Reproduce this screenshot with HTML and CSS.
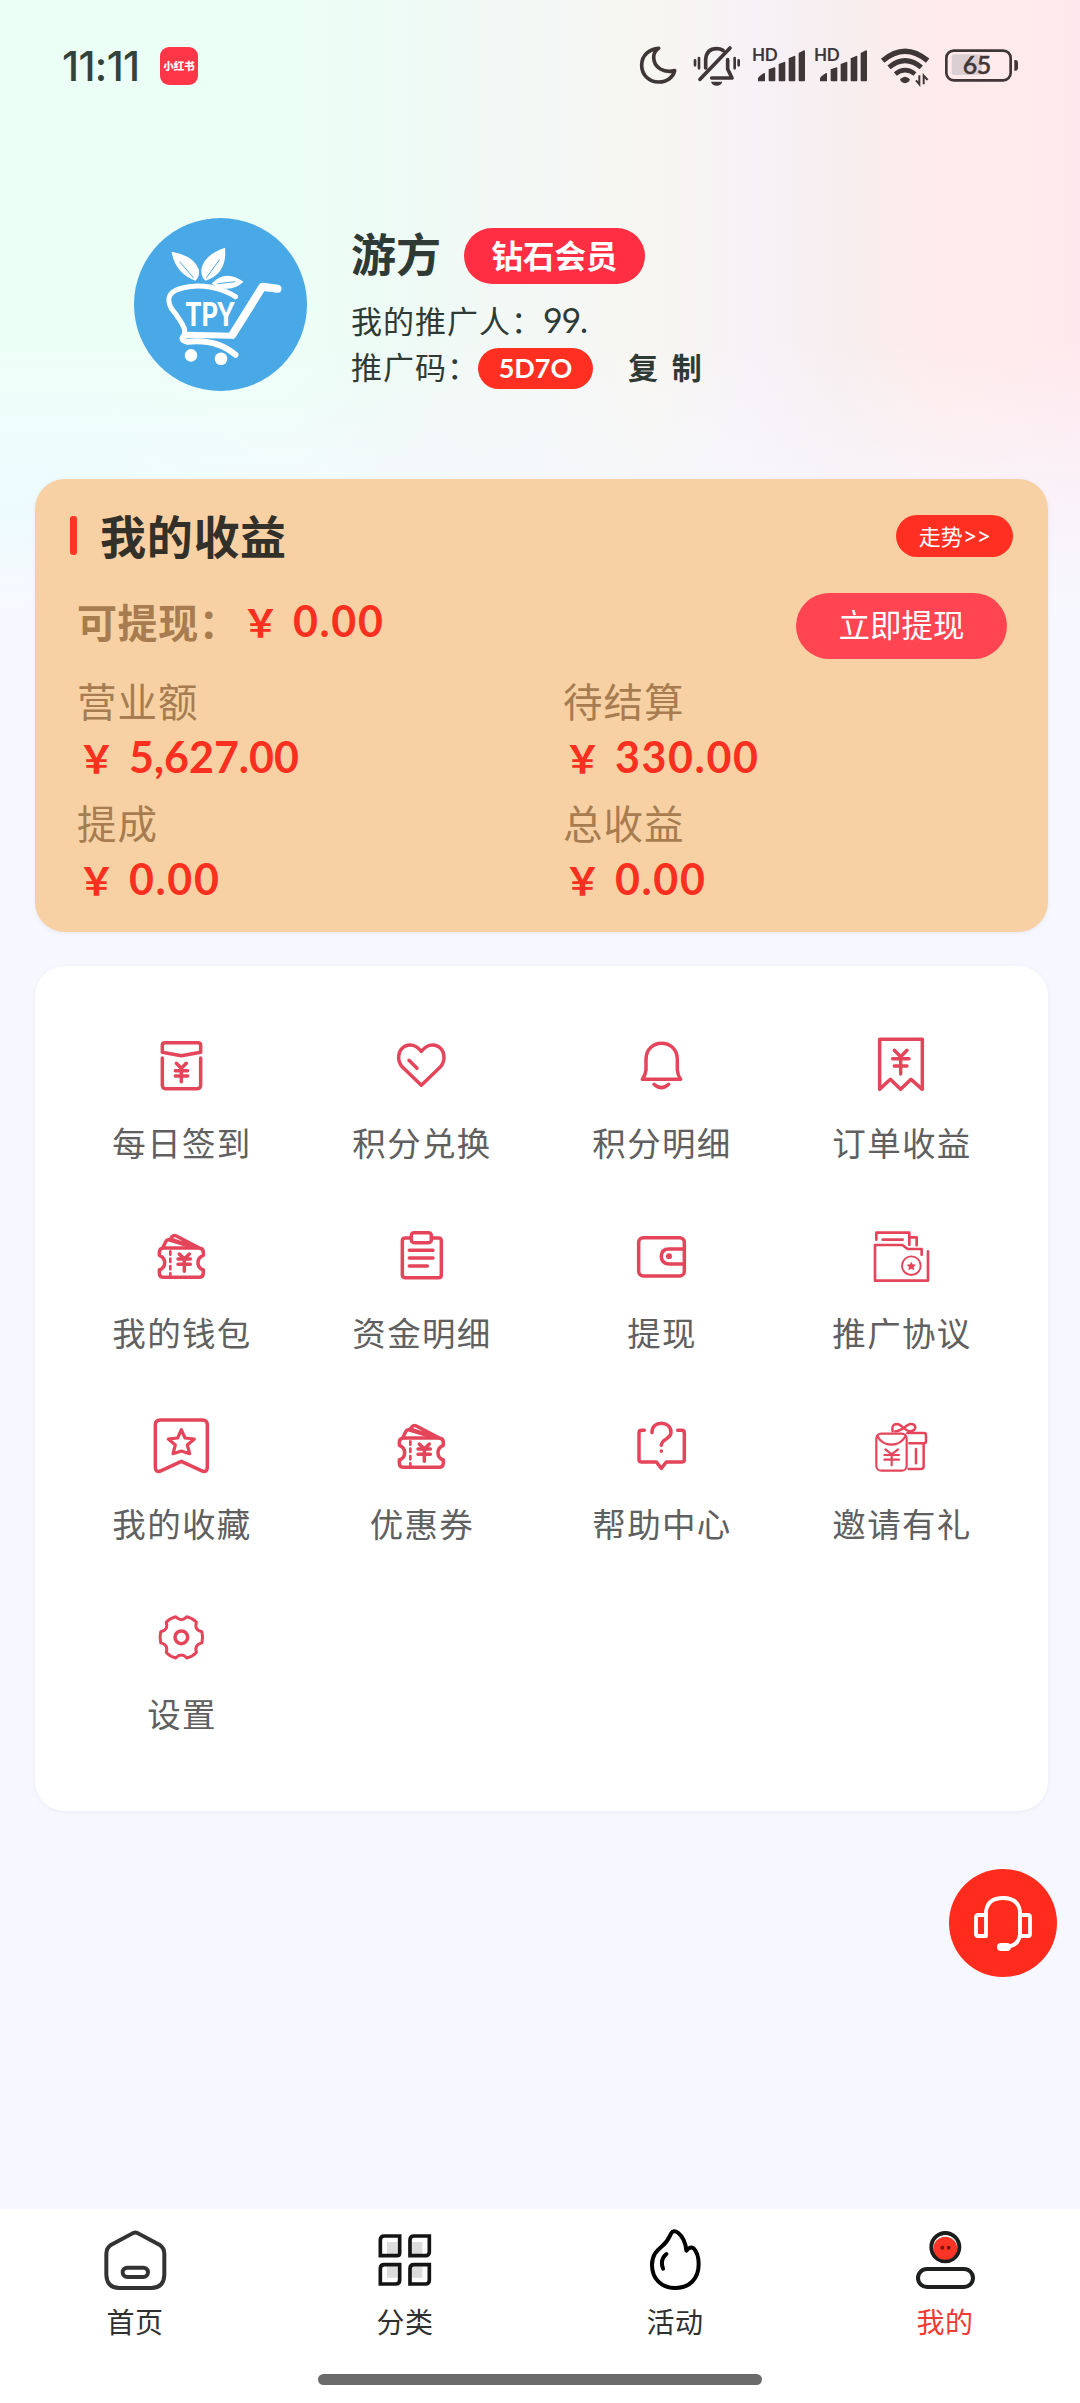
FILE: index.html
```html
<!DOCTYPE html>
<html lang="zh-CN">
<head>
<meta charset="utf-8">
<title>我的</title>
<link rel="stylesheet" href="styles.css">
</head>
<body>
<svg class="defs" aria-hidden="true">
  <symbol id="ticket" viewBox="174 638 200 200">
    <path d="M222 713h104q14 0 14 14v8q-16 6-16 22t16 22v8q0 14-14 14H222q-14 0-14-14v-8q16-6 16-22t-16-22v-8q0-14 14-14z"/>
    <path d="M220 709l7-15q4-8 12-5l72 22M240 688l6-9q6-6 13-2l66 35M246 688l66 22"/>
    <path stroke-width="8" stroke-dasharray="10 12" d="M241 723v74"/>
    <path d="M268 731l15 15 15-15M264 746h37M264 762h37M283 746v37"/>
  </symbol>
</svg>
<div class="page">
  <header class="status">
    <span class="time">11:11</span>
    <span class="app-badge">小红书</span>
    <div class="status-icons">
      <svg class="moon" viewBox="55 70 120 140"><path d="M117 86C92 87 66 105 66 137C66 166 88 187 117 187C143 187 161 172 165 153C134 160 102 146 102 113C102 101 108 92 117 86Z" fill="none" stroke="currentColor" stroke-width="11" stroke-linejoin="round"/></svg>
      <svg class="bell" viewBox="215 70 150 140"><g fill="none" stroke="currentColor" stroke-width="11" stroke-linecap="round" stroke-linejoin="round"><path d="M329 85L239 179M256 145V119Q259 87 289 87Q300 87 308 92M322 120V148L335 175H274"/><path stroke-width="8" d="M224 122V137M236 115V146M343 115V146M355 122V137"/></g><path d="M272 186h34q-4 12-17 12t-17-12z" fill="currentColor"/></svg>
      <svg class="signal" viewBox="395 70 160 140"><text class="hd" x="395" y="124" textLength="77">HD</text><path d="M413 184v-8q2-6 17-15q4-2 4 2v21q0 1-4 1h-13q-4 0-4-1zM445 149l18-6q2 0 2 2v37q0 3-3 3h-14q-3 0-3-3zM475 133l18-7q2 0 2 2v54q0 3-3 3h-14q-3 0-3-3zM505 116l18-8q2 0 2 2v72q0 3-3 3h-14q-3 0-3-3zM535 100l16-8q3 0 3 2v88q0 3-3 3h-13q-3 0-3-3z" fill="currentColor"/></svg>
      <svg class="signal second" viewBox="395 70 160 140"><text class="hd" x="395" y="124" textLength="77">HD</text><path d="M413 184v-8q2-6 17-15q4-2 4 2v21q0 1-4 1h-13q-4 0-4-1zM445 149l18-6q2 0 2 2v37q0 3-3 3h-14q-3 0-3-3zM475 133l18-7q2 0 2 2v54q0 3-3 3h-14q-3 0-3-3zM505 116l18-8q2 0 2 2v72q0 3-3 3h-14q-3 0-3-3zM535 100l16-8q3 0 3 2v88q0 3-3 3h-13q-3 0-3-3z" fill="currentColor"/></svg>
      <svg class="wifi" viewBox="780 70 150 140"><g fill="none" stroke="currentColor"><path stroke-width="16" d="M788 123Q855 66 923 123"/><path stroke-width="15" d="M807 143Q855 103 904 143"/><path stroke-width="14" d="M826 163Q855 140 885 163"/><path stroke-width="6" d="M898 167v27l-10-12M911 194v-26l12 13"/></g><path d="M840 179q15-15 30 0q-3 10-15 12q-12-2-15-12z" fill="currentColor"/></svg>
      <svg class="battery" viewBox="972 70 228 140"><rect x="995" y="104" width="91" height="62" rx="6" fill="#dccfd3"/><rect x="979" y="93" width="193" height="89" rx="22" fill="none" stroke="currentColor" stroke-width="8"/><path d="M1183 121h3q8 0 8 8v16q0 8-8 8h-3z" fill="currentColor"/><text class="pct" x="1028" y="164" textLength="86">65</text></svg>
    </div>
  </header>

  <section class="profile">
    <svg class="avatar" viewBox="24.5 28.3 173 173">
      <circle cx="111" cy="114.8" r="86.5" fill="#49a9e6"/>
      <g fill="#fff"><path d="M62 62Q84 66 89 79Q91 86 86 91Q66 84 62 62zM115.500 58Q95 65 92 79Q91 87 96 91Q118 84 115.500 58zM134 92Q116 79 102 94Q120 105 134 92z"/><circle cx="81.500" cy="165.700" r="6.300"/><circle cx="111.500" cy="169" r="6.300"/></g>
      <path d="M70 72L84 88M110 70L97 88M126 92L108 94" stroke="#49a9e6" stroke-width="1" fill="none"/>
      <g fill="none" stroke="#fff" stroke-width="6" stroke-linecap="round" stroke-linejoin="round"><path stroke-width="5" d="M126 107C111 97 90 94 74 98C60 101 56 108 62 119Q71 130 75 139V144"/><path stroke-width="8" d="M168 99L153 97L123 145"/><path d="M123 146L76 145Q69 150 78 152C96 150 112 153 126 165"/></g>
      <text class="logo-text" x="76" y="136" textLength="49" lengthAdjust="spacingAndGlyphs">TPY</text>
    </svg>
    <div class="who">
      <div class="name-row"><h1>游方</h1><span class="level">钻石会员</span></div>
      <p class="promoter">我的推广人：<span class="num">99.</span></p>
      <p class="code-row"><span>推广码：</span><b class="code">5D7O</b><span class="copy">复 制</span></p>
    </div>
  </section>

  <section class="income">
    <div class="income-head"><h2>我的收益</h2><span class="trend">走势<i>&gt;&gt;</i></span></div>
    <div class="withdraw"><span class="can">可提现：</span><span class="money spaced"><i>￥</i>0.00</span><span class="btn">立即提现</span></div>
    <div class="stats">
      <div><label>营业额</label><span class="money"><i>￥</i>5,627.00</span></div>
      <div><label>待结算</label><span class="money spaced"><i>￥</i>330.00</span></div>
      <div><label>提成</label><span class="money spaced"><i>￥</i>0.00</span></div>
      <div><label>总收益</label><span class="money spaced"><i>￥</i>0.00</span></div>
    </div>
  </section>

  <section class="menu">
    <div class="item"><svg viewBox="174 66 200 200"><path d="M225 98h99q8 0 8 8v21l-58 10l-57-10v-21q0-8 8-8zM217 144v82q0 10 10 10h95q10 0 10-10v-82"/><path d="M259 160l15 15 15-15M256 182h37M256 198h37M274 178v37"/></svg><span>每日签到</span></div>
    <div class="item"><svg viewBox="894 66 200 200"><path d="M994 226L938 172C918 150 925 120 944 109C963 100 982 108 994 124C1006 108 1025 100 1044 109C1063 120 1070 150 1050 172ZM957 151l24 24"/></svg><span>积分兑换</span></div>
    <div class="item"><svg viewBox="174 66 200 200"><path d="M217 208h115Q323 196 322 180V148C321 84 229 84 228 148V180Q226 196 217 208zM252 223q22 20 44 0"/></svg><span>积分明细</span></div>
    <div class="item"><svg viewBox="894 66 200 200"><path d="M929 88h128v150l-34-30l-31 30l-31-30l-32 30z"/><path d="M973 121l19 19 19-19M968 146h49M973 168h38M992 146v46"/></svg><span>订单收益</span></div>
    <div class="item"><svg><use href="#ticket"/></svg><span>我的钱包</span></div>
    <div class="item"><svg viewBox="894 638 200 200"><path d="M964 683h-18q-9 0-9 9v102q0 8 9 8h100q8 0 8-8V692q0-9-8-9h-22"/><rect x="964" y="667" width="60" height="30" rx="8"/><path d="M958 720h71M958 743h71M958 767h54"/></svg><span>资金明细</span></div>
    <div class="item"><svg viewBox="174 638 200 200"><rect x="206" y="682" width="137" height="115" rx="14"/><path d="M343 716H297q-23 0-23 22t23 23h46"/><circle class="solid" cx="297" cy="738" r="9"/></svg><span>提现</span></div>
    <div class="item"><svg viewBox="894 638 200 200"><g stroke-width="8"><path d="M919 688v-21h99v36M1018 681h22v24M938 688h60M1055 733v-17h-42l-16-12H915v107h159v-88"/></g><circle cx="1024" cy="766" r="28" stroke-width="5.500"/><path class="solid" d="M1024 754l4 8 10 1-7 7 2 10-9-5-9 5 2-10-7-7 10-1z"/></svg><span>推广协议</span></div>
    <div class="item"><svg viewBox="174 69 200 200"><path d="M211 90h126q15 0 15 15v125q0 20-18 12l-60-28l-60 28q-18 8-18-12V105q0-15 15-15z"/><path d="M274 119l11 25 28 3-21 18 7 26-25-8-25 8 7-26-21-18 28-3z" stroke-width="9.500"/></svg><span>我的收藏</span></div>
    <div class="item"><svg><use href="#ticket"/></svg><span>优惠券</span></div>
    <div class="item"><svg viewBox="174 69 200 200"><path d="M223 121h-8q-8 0-8 8v80q0 7 8 7h44l15 19l15-19h46q8 0 8-7v-80q0-8-8-8h-12"/><path d="M246 128C244 90 304 90 303 128C302 147 274 148 274 166M274 183v1"/></svg><span>帮助中心</span></div>
    <div class="item"><svg viewBox="894 69 200 200"><g stroke-width="6.500"><rect x="919" y="131" width="91" height="111" rx="15"/><path d="M922 138q14 26 42 26t43-26M946 178l19 15 19-15M943 195h44M943 209h44M965 195v31"/><path stroke-width="7.500" d="M1012 129h50q6 0 6 6v19q0 6-6 6h-44M1061 162v67q0 8-8 8h-37M1038 177v43M968 124Q963 102 982 102C994 103 1008 125 1020 124Q1036 122 1036 111Q1034 101 1021 102C1010 103 994 125 976 124"/></g></svg><span>邀请有礼</span></div>
    <div class="item"><svg viewBox="174 640 200 200"><g transform="translate(274 740)"><path stroke-width="9" d="M61.800-16.600Q66 0 61.800 16.600Q38 22 45.300 45.300Q33 58 16.600 61.800Q0 44-16.600 61.800Q-33 58-45.300 45.300Q-38 22-61.800 16.600Q-66 0-61.800-16.600Q-38-22-45.300-45.300Q-33-58-16.600-61.800Q0-44 16.600-61.800Q33-58 45.300-45.300Q38-22 61.800-16.600z"/><circle r="19"/></g></svg><span>设置</span></div>
  </section>

  <div class="service"><svg viewBox="0 0 60 60"><g fill="none" stroke="#fff" stroke-width="3.800" stroke-linejoin="round"><path d="M13 23V18Q15 5 30 5T47 18V41Q46 53 33 54"/><path d="M13 22h-8q-2 0-2 2v17q0 2 2 2h8zM47 22h8q2 0 2 2v17q0 2-2 2h-8z"/></g><rect x="24" y="50" width="14" height="8" rx="4" fill="#fff"/></svg></div>

  <nav class="tabs">
    <div class="tab-row">
    <div class="tab"><svg viewBox="126 80 200 200"><path d="M216 100Q226 93 236 100L298 133Q313 143 313 160V224Q312 262 274 263H178Q140 262 139 224V160Q139 143 154 133Z" fill="none" stroke="#333" stroke-width="12"/><rect x="188" y="202" width="76" height="28" rx="14" fill="none" stroke="#333" stroke-width="12"/></svg><span>首页</span></div>
    <div class="tab"><svg viewBox="935 80 200 200"><g fill="#dcdcdc"><path d="M980 125h32v37h-32zM1054 125h32v37h-32zM980 198h32v34h-32zM1054 198h32v34h-32z"/></g><g fill="none" stroke="#141414" stroke-width="11"><path d="M972 107h46v51q0 8-8 8h-50v-47q0-12 12-12zM1061 107h46v47q0 12-12 12h-46v-47q0-12 12-12zM972 193h46v46q0 12-12 12h-46v-46q0-12 12-12zM1061 193h46v46q0 12-12 12h-46v-46q0-12 12-12z"/></g></svg><span>分类</span></div>
    <div class="tab"><svg viewBox="305 80 200 200"><path d="M335 194C335 165 348 152 365 138C382 124 386 112 392 100Q399 87 414 98C430 111 436 129 438 151Q450 137 460 144C471 155 475 173 475 192C475 237 446 263 405 263C363 263 335 235 335 194ZM378 161Q358 178 368 205" fill="none" stroke="#000" stroke-width="12" stroke-linecap="round" stroke-linejoin="round"/></svg><span>活动</span></div>
    <div class="tab active"><svg viewBox="1114 80 200 200"><circle cx="1214" cy="140" r="42" fill="#fff" stroke="#1d1f1e" stroke-width="12"/><circle cx="1214" cy="145" r="36" fill="#fc3526"/><path d="M1175 157A42 42 0 0 0 1253 157" fill="none" stroke="#1d1f1e" stroke-width="11"/><circle cx="1205" cy="142" r="6" fill="#7c1712"/><circle cx="1224" cy="142" r="6" fill="#7c1712"/><rect x="1132" y="206" width="165" height="54" rx="27" fill="none" stroke="#1d1f1e" stroke-width="12"/></svg><span>我的</span></div>
    </div>
    <div class="home-bar"></div>
  </nav>
</div>
</body>
</html>
```
FILE: styles.css
```css
* { box-sizing: border-box; margin: 0; padding: 0; }
body { background: #f7f8ff; font-family: "Noto Sans CJK SC", sans-serif; color: #303a35; }
i { font-style: normal; }
.defs { position: absolute; width: 0; height: 0; }
.page {
  position: relative;
  width: 1080px;
  height: 2403px;
  display: flex;
  flex-direction: column;
  background:
    radial-gradient(ellipse 320px 110px at 0 490px, rgba(236,252,255,.9), rgba(236,252,255,0)),
    linear-gradient(180deg, rgba(247,248,255,0) 0, rgba(247,248,255,0) 340px, rgba(247,248,255,.55) 470px, #f7f8ff 620px),
    linear-gradient(90deg, #ecfff7 0, #ecfff7 27%, #eefaf5 38%, #f4f7f5 52%, #f7f6f1 60%, #f7f2f7 70%, #f7eeef 78%, #ffebeb 87%, #ffe8ed 100%);
}

.status { display: flex; align-items: flex-start; height: 218px; padding: 43.300px 0 0 62px; }
.time { width: 98px; font: 500 41px/46px Inter, sans-serif; letter-spacing: -.600px; color: #33423b; }
.app-badge { width: 38px; height: 38px; margin-top: 4px; border-radius: 9px; background: #ff3548; color: #fff; font-weight: 900; font-size: 10.500px; line-height: 37px; text-align: center; white-space: nowrap; }
.status-icons { display: flex; margin-left: 440.300px; color: #3f3638; }
.status-icons svg { height: 46.670px; }
.moon { width: 40px; }
.bell { width: 50px; margin-left: 13.400px; }
.signal { width: 53.330px; margin-left: 10px; }
.signal.second { margin-left: 9.300px; }
.wifi { width: 50px; margin-left: 12.300px; }
.battery { width: 76px; margin-left: 14px; }
.hd { font: 700 51px Lato, sans-serif; fill: currentColor; }
.pct { font: 500 75px Lato, sans-serif; fill: currentColor; stroke: currentColor; stroke-width: 1.500; }

.profile { display: flex; height: 261px; padding-left: 134px; }
.avatar { width: 173px; height: 173px; }
.logo-text { font: 900 32px Lato, sans-serif; fill: #fff; }
.who { margin-left: 44px; padding-top: 10px; }
.name-row { display: flex; align-items: center; height: 56px; }
h1 { width: 113px; margin-top: -6px; font-size: 45px; line-height: 56px; font-weight: 700; color: #2f3a36; }
.level { width: 181px; height: 56px; border-radius: 28px; background: #ff2e42; color: #fff; font-weight: 700; font-size: 31.500px; line-height: 52px; text-align: center; }
.promoter { margin-top: 13px; font-size: 31px; letter-spacing: 1px; line-height: 46px; white-space: nowrap; }
.num { font-family: Lato, sans-serif; font-size: 34px; letter-spacing: -1.200px; }
.code-row { display: flex; align-items: center; height: 46px; margin-top: 2px; font-size: 31px; letter-spacing: 1px; line-height: 42px; white-space: nowrap; }
.code-row span { padding-bottom: 4px; }
.code-row span:first-child { width: 127px; }
.code { width: 115px; height: 41px; border-radius: 21px; background: #ff3022; color: #fff; font: 700 27px/40px Lato, sans-serif; letter-spacing: 0; text-align: center; }
.copy { margin-left: 35px; font-size: 30px; font-weight: 600; letter-spacing: 0; word-spacing: 7px; }

.income { width: 1013px; height: 453px; margin-left: 35px; padding: 20px 35px 0; border-radius: 30px; background: #f7d1a3; box-shadow: 0 1px 4px rgba(120,110,140,.12); }
.income-head { display: flex; align-items: center; height: 74px; }
h2 { display: flex; align-items: center; flex: 1; font-size: 46px; letter-spacing: .700px; line-height: 60px; margin-top: -5px; font-weight: 700; color: #33302a; }
h2::before { content: ""; width: 7px; height: 39px; margin: 4px 23px 0 0; border-radius: 3px; background: #ff3424; }
.trend { display: flex; justify-content: center; width: 117px; height: 42px; border-radius: 21px; background: #ff3022; color: #fff; font-size: 22px; line-height: 40px; }
.trend i { font-family: Lato, sans-serif; font-size: 25px; letter-spacing: -.800px; }
.withdraw { display: flex; align-items: center; height: 68px; margin: 19px 6px 0 7px; }
.can { width: 164px; margin-top: -10px; font-size: 40px; letter-spacing: .600px; font-weight: 700; color: #a67c50; white-space: nowrap; }
.money { display: block; font: 700 43px/44px Lato, sans-serif; color: #f92f20; white-space: nowrap; }
.money.spaced { letter-spacing: 1.600px; }
.money i { display: inline-block; width: 52px; font: 700 38px/44px "Noto Sans CJK SC", sans-serif; text-indent: .500px; }
.withdraw .money { margin-top: -10px; }
.btn { width: 211px; height: 66px; margin-left: auto; border-radius: 33px; background: #ff4552; color: #fff; font-size: 31.500px; line-height: 61px; text-align: center; }
.stats { display: grid; grid-template-columns: 486px 1fr; grid-auto-rows: 121.500px; padding: 14px 0 0 7px; }
label { display: block; padding-top: 4px; font-size: 39.500px; letter-spacing: 1px; line-height: 44px; color: #a67c50; }
.stats .money { margin-top: 13px; }

.menu { display: grid; grid-template-columns: repeat(4, 240px); grid-auto-rows: 190.500px; width: 1013px; height: 845px; margin: 34px 0 0 35px; padding: 66px 0 0 26.300px; border-radius: 30px; background: #fff; box-shadow: 0 1px 4px rgba(120,110,140,.1); }
.item { display: flex; flex-direction: column; align-items: center; gap: 19px; }
.item svg { width: 66.670px; height: 66.670px; fill: none; stroke: #e4455a; stroke-width: 10.500; stroke-linecap: round; stroke-linejoin: round; }
.item .solid { fill: #e4455a; stroke: none; }
.item span { font-size: 33.500px; letter-spacing: 1.300px; line-height: 48px; margin-right: -1.300px; color: #606060; white-space: nowrap; }

.service { position: absolute; left: 949px; top: 1869px; display: grid; place-items: center; width: 108px; height: 108px; border-radius: 50%; background: #ff2b1d; }
.service svg { width: 60px; height: 60px; }

.tabs { height: 194px; margin-top: auto; background: #fff; }
.tab-row { display: grid; grid-template-columns: repeat(4, 1fr); height: 165px; }
.tab { display: flex; flex-direction: column; align-items: center; padding-top: 17.700px; }
.tab svg { width: 66.670px; height: 66.670px; }
.tab span { margin-top: 7.500px; font-size: 28px; letter-spacing: .500px; line-height: 40px; color: #303030; }
.tab.active span { color: #f03a36; }
.home-bar { width: 444px; height: 11px; margin: 0 auto; border-radius: 6px; background: #6b6b6b; }
```
